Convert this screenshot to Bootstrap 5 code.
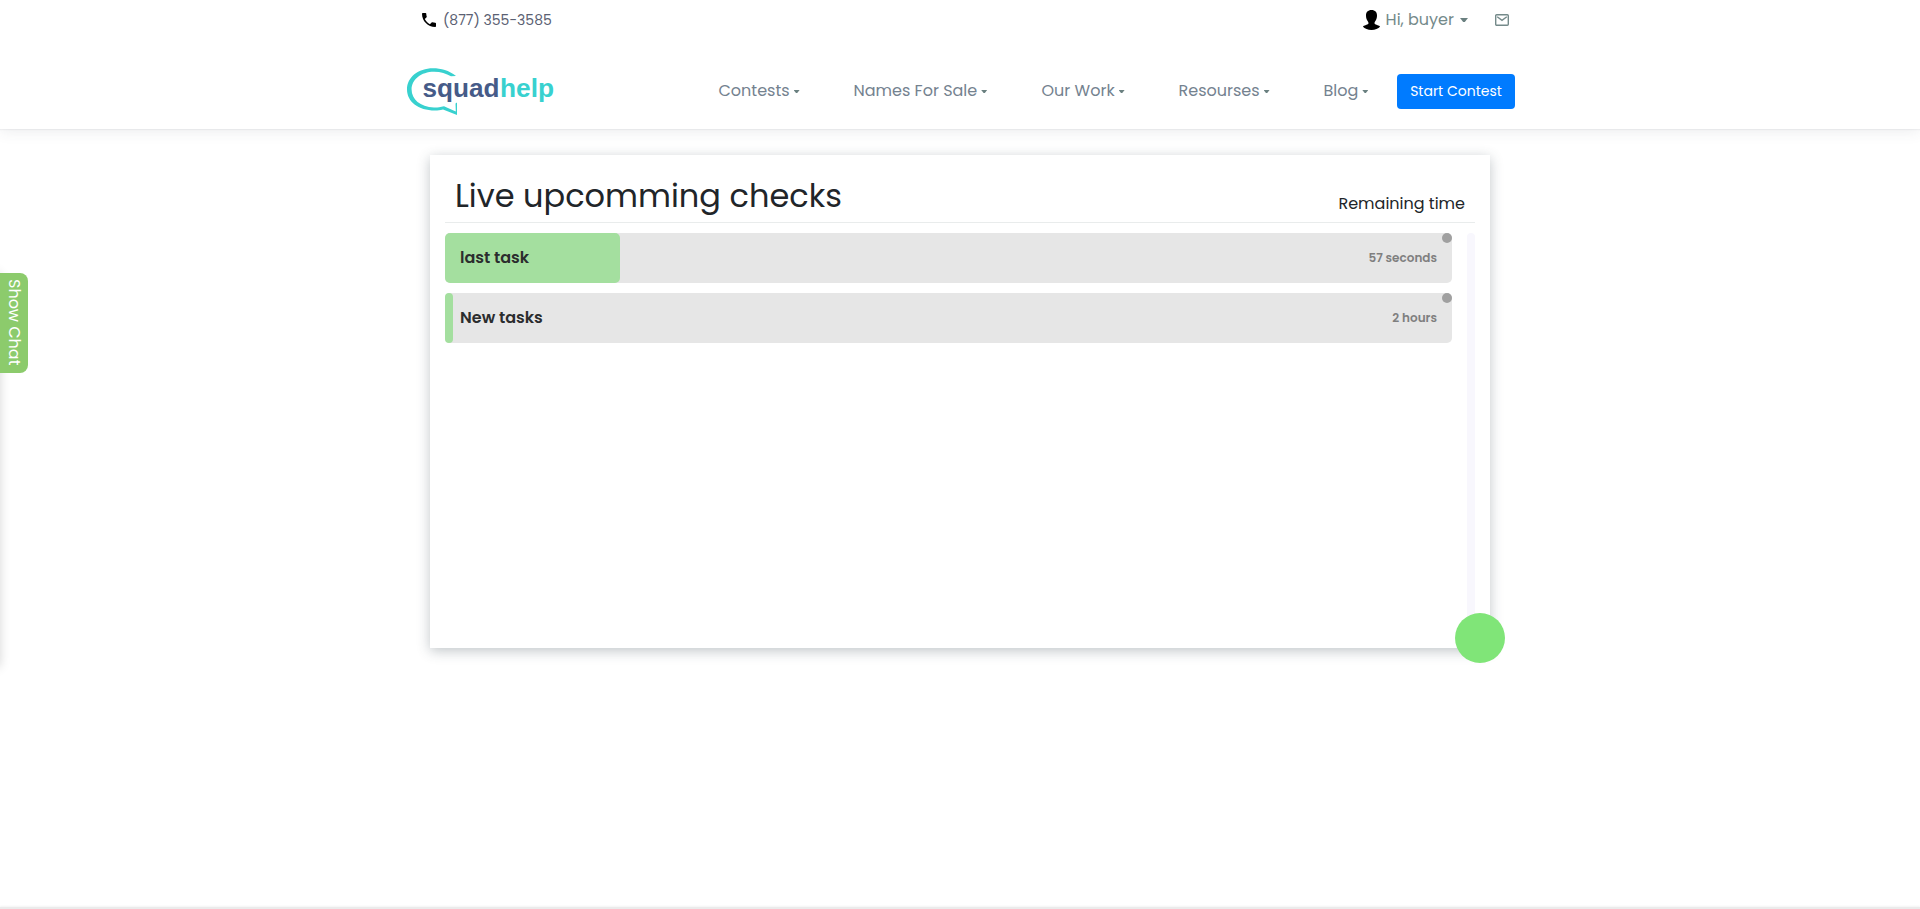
<!DOCTYPE html>
<html lang="en">
<head>
<meta charset="utf-8">
<meta name="viewport" content="width=device-width, initial-scale=1">
<title>Squadhelp – Live upcomming checks</title>
<link href="https://cdn.jsdelivr.net/npm/bootstrap@5.3.0/dist/css/bootstrap.min.css" rel="stylesheet">
<style>
body{font-family:Poppins,Inter,"Open Sans",sans-serif;color:#212529;background:#fff;height:909px;overflow:hidden}
.site-header{height:129px;background:#fff;box-shadow:0 2px 14px rgba(60,70,90,.1),0 1px 1px rgba(60,70,90,.06)}
.inner{width:1110px;margin:0 auto;padding-left:2px}
.topline{height:40px;padding-left:17px;padding-right:6px}
.phone{font-size:14px;color:#5a6072;margin-left:7px}
.hello{color:#748a8a;font-size:16px;margin:0 6px 0 6px}
.mainline{height:103px}
.logo{width:148px;height:48px;margin-top:-1px}
.menu{margin-left:163.500px;margin-right:.5px;margin-top:-1px}
.menu a{color:#74828f;font-size:16px;text-decoration:none;white-space:nowrap;line-height:24px}
.menu .tri{width:6px;height:3px;margin:1px 0 0 4px;background:#6a8080;clip-path:polygon(0 0,100% 0,60% 100%,40% 100%)}
.tri-lg{width:8px;height:4px;background:#6a8080;clip-path:polygon(0 0,100% 0,60% 100%,40% 100%)}
.mail{width:20px;margin-left:21px}
.m1{width:135px}.m2{width:188px}.m3{width:137px}.m4{width:145px}.m5{width:73px}
.btn-start{width:118px;height:35px;background:#007bff;color:#fff;font-size:14px;border-radius:4px;padding:0}
.btn-start:hover{background:#0069d9;color:#fff}
.panel{width:1060px;height:493px;margin:26px auto 0;background:#fff;padding:15px;box-shadow:0 3px 12px rgba(50,65,75,.3)}
.panel-head{height:53px;border-bottom:1px solid #e9ecec;padding:0 10px}
.panel-head h1{font-size:32px;font-weight:400;line-height:48px;padding-bottom:2px}
.remain{font-size:16px;line-height:24px;margin-bottom:6px}
.checks{width:1007px}
.check{height:50px;background:#e6e6e6;border-radius:5px;padding:0 15px;margin-bottom:10px}
.check .fill{left:0;top:0;height:100%;background:#a4df9f;border-radius:5px}
.check .dot{right:0;top:0;width:10px;height:10px;border-radius:50%;background:#a0a0a0}
.check b{font-size:16px;font-weight:600;color:#2b2d2e}
.check small{font-size:12px;font-weight:600;color:#7f7f7f}
.track{width:8px;height:400px;border-radius:4px;background:#f8f7fd}
.add{width:50px;height:50px;right:-15px;bottom:-15px;border-radius:50%;background:#80e578;border:0}
.chat-tab{left:0;top:273px;width:28px;height:100px;background:#8ccb6c;color:#fff;border-radius:0 8px 8px 0;writing-mode:vertical-rl;font-size:16px;line-height:28px;text-align:center;padding-bottom:1px}
.chat-drawer{left:-300px;top:273px;width:300px;height:394px;box-shadow:0 0 10px rgba(0,0,0,.16)}
.foot{left:0;right:0;bottom:0;height:2px;background:#ebebeb;box-shadow:0 -1px 2px rgba(0,0,0,.05)}
</style>
</head>
<body class="position-relative">
<header class="site-header">
  <div class="inner topline d-flex align-items-center">
    <svg width="14" height="14" viewBox="3 3 18 18"><path d="M6.600 10.800c1.400 2.800 3.800 5.100 6.600 6.600l2.200-2.200c.3-.3.7-.4 1-.2 1.100.4 2.300.6 3.600.6.6 0 1 .4 1 1V20c0 .6-.4 1-1 1C10.600 21 3 13.400 3 4c0-.6.4-1 1-1h3.500c.6 0 1 .4 1 1 0 1.300.2 2.500.6 3.600.1.3 0 .7-.2 1z"/></svg>
    <span class="phone">(877) 355-3585</span>
    <div class="d-flex align-items-center ms-auto">
      <svg width="17" height="20" viewBox="0 0 17 20"><path d="M8.500 0C4.800 0 3 2.300 3 5.500c0 2 .4 3.200 1 4.500.5 1.200 1.500 2 1.500 3.200 0 .9-1 1.200-2.500 1.700-1.700.5-3 1-3 1.900C1.500 18.800 5 20 8.500 20s7-1.200 8.500-3.200c0-.9-1.300-1.400-3-1.900-1.500-.5-2.500-.8-2.500-1.700 0-1.200 1-2 1.500-3.200.6-1.300 1-2.500 1-4.500C14 2.300 12.200 0 8.500 0z"/></svg>
      <span class="hello">Hi, buyer</span>
      <span class="tri-lg"></span>
      <svg class="mail" height="12" viewBox="-3 0 17 12" preserveAspectRatio="xMaxYMid" fill="none" stroke="#748a8a" stroke-width="1.400"><rect x=".7" y=".7" width="12.600" height="10.600" rx="1"/><path d="M2.200 2.800L7 6.300l4.800-3.500"/></svg>
    </div>
  </div>
  <div class="inner mainline d-flex align-items-center">
    <svg class="logo" viewBox="0 0 148 48">
      <path d="M49 9C42 3.500 34 1.300 26 1.300 11 1.300 0 10.500 0 22.500S11 43.500 28 43.500c3 0 5-.3 8-1L50 48V35.500l-1.500 1 .3 8L37 39.300c-4 1-7 1.300-10 1.200C13 40 4.600 32 4.600 22.500 4.600 12.500 14 4.700 27 4.700c7 0 12 1.700 17 4.600z" fill="#38d1cf"/>
      <text x="15.500" y="29.500" font-family="Liberation Sans" font-weight="700" font-size="25" textLength="77" lengthAdjust="spacingAndGlyphs" fill="#465b88">squad</text>
      <text x="93" y="29.500" font-family="Liberation Sans" font-weight="700" font-size="25" textLength="54" lengthAdjust="spacingAndGlyphs" fill="#38d1cf">help</text>
    </svg>
    <nav class="menu d-flex">
      <a class="m1 d-flex align-items-center" href="#">Contests<i class="tri"></i></a>
      <a class="m2 d-flex align-items-center" href="#">Names For Sale<i class="tri"></i></a>
      <a class="m3 d-flex align-items-center" href="#">Our Work<i class="tri"></i></a>
      <a class="m4 d-flex align-items-center" href="#">Resourses<i class="tri"></i></a>
      <a class="m5 d-flex align-items-center" href="#">Blog<i class="tri"></i></a>
    </nav>
    <a class="btn btn-start d-flex align-items-center justify-content-center" href="#">Start Contest</a>
  </div>
</header>
<main class="panel position-relative">
  <div class="panel-head d-flex align-items-end justify-content-between">
    <h1 class="m-0">Live upcomming checks</h1>
    <div class="remain">Remaining time</div>
  </div>
  <div class="d-flex justify-content-between" style="padding-top:10px">
    <div class="checks">
      <div class="check position-relative d-flex align-items-center justify-content-between">
        <span class="fill position-absolute" style="width:175px"></span><b class="position-relative">last task</b><small>57 seconds</small><span class="dot position-absolute"></span>
      </div>
      <div class="check position-relative d-flex align-items-center justify-content-between">
        <span class="fill position-absolute" style="width:8px"></span><b class="position-relative">New tasks</b><small>2 hours</small><span class="dot position-absolute"></span>
      </div>
    </div>
    <div class="track"></div>
  </div>
  <button class="add position-absolute" aria-label="Add"></button>
</main>
<div class="chat-drawer position-absolute"></div>
<div class="chat-tab position-absolute">Show Chat</div>
<footer class="foot position-absolute"></footer>
<script src="https://cdn.jsdelivr.net/npm/bootstrap@5.3.0/dist/js/bootstrap.bundle.min.js"></script>
</body>
</html>
